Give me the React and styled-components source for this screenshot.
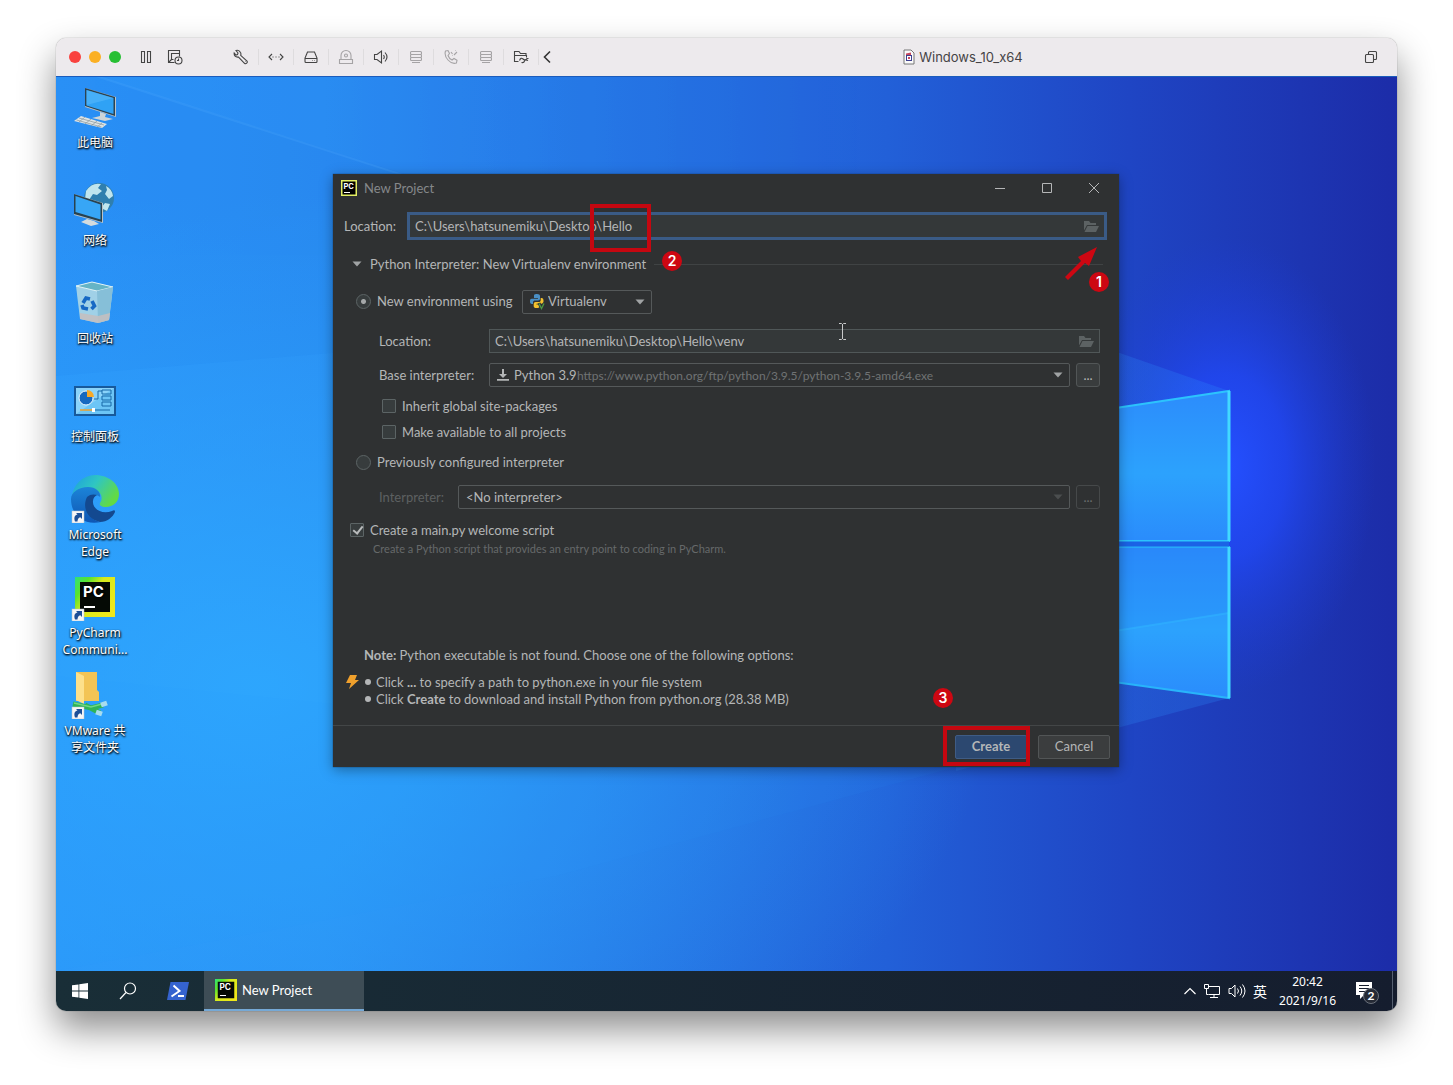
import React, { useState } from "react";
import styled, { createGlobalStyle } from "styled-components";

const DESKTOP_ICONS = [
  { lines: ["此电脑"], icon: "computer" },
  { lines: ["网络"], icon: "network" },
  { lines: ["回收站"], icon: "recycle" },
  { lines: ["控制面板"], icon: "panel" },
  { lines: ["Microsoft", "Edge"], icon: "edge" },
  { lines: ["PyCharm", "Communi..."], icon: "pycharm" },
  { lines: ["VMware 共", "享文件夹"], icon: "share" },
];

const App = () => {
  return (
    <Page>
      <GlobalStyle />
      <VmWindow>
        <TitleBar />
        <Desktop>
          <Wallpaper />
          <IconList>
            {DESKTOP_ICONS.map((item) => (
              <DesktopIcon key={item.icon} href="#">
                <DesktopGlyph name={item.icon} />
                {item.lines.map((line) => (
                  <span key={line}>{line}</span>
                ))}
              </DesktopIcon>
            ))}
          </IconList>
          <NewProject />
        </Desktop>
        <Taskbar />
      </VmWindow>
    </Page>
  );
};

export default App;

const TitleBar = () => (
  <Bar>
    <Lights>
      <Light color="#f9423f" aria-label="Close" />
      <Light color="#fbb024" aria-label="Minimize" />
      <Light color="#27bf34" aria-label="Zoom" />
    </Lights>
    <ToolPair>
      <Tool aria-label="Pause">
        <Line16>
          <path d="M3.500 2.500h3v11h-3zM9.500 2.500h3v11h-3z" />
        </Line16>
      </Tool>
      <Tool aria-label="Snapshots">
        <Line16>
          <path d="M7.500 13.500H1.500v-12h11v6M6.500 10.500h-2v-6h8M4.500 10.500l-3 3" />
          <circle cx="11.500" cy="11.500" r="3.500" />
          <path d="M11.500 9.500v2h-1.500" />
        </Line16>
      </Tool>
    </ToolPair>
    <DeviceTools>
      <Tool aria-label="Settings">
        <Line16>
          <path d="M7.500 3.500C6.500 1.500 4.500 1 3 1.500l2 2.500-.5 1.500L3 6 1.200 4C.8 6.500 2.500 8.500 5.500 8l6 6.300c1.500 1.200 3.500-.8 2.500-2.300L7.700 6.300c.3-1 .3-2-.2-2.800z" />
          <path d="M12.300 12.500h.4" />
        </Line16>
      </Tool>
      <Tool aria-label="Network adapter">
        <Line16>
          <path d="M4 5L1 8l3 3M12 5l3 3-3 3M4.500 8h1M7.500 8h1M10.500 8h1" />
        </Line16>
      </Tool>
      <Tool aria-label="Hard disk">
        <Line16>
          <path d="M4.500 3h7l2.500 6v3.500q0 1-1 1H3q-1 0-1-1V9zM2 9.500h12M9.500 11.500h.5M11.500 11.500h.5" />
        </Line16>
      </Tool>
      <Tool $off aria-label="CD drive">
        <Line16>
          <path d="M1.500 10.500h13v4h-13zM3 10.500V6.500a5 5 0 0 1 10 0v4" />
          <circle cx="8" cy="6.500" r="1.500" />
        </Line16>
      </Tool>
      <Tool aria-label="Sound">
        <Line16>
          <path d="M1.500 5.500v5H4l4.500 3.500V2L4 5.500zM10.500 6q1.500 2 0 4M12 3.500q4 4.500 0 9" />
        </Line16>
      </Tool>
      <Tool $off aria-label="Storage">
        <StackIcon />
      </Tool>
      <Tool $off aria-label="Phone">
        <Line16>
          <path d="M2.500 2L5 1.500l1.500 3L5 6.500q1 3 4 4.500l2-1.500 3 1.800-.6 2.700Q9 15.500 5 11T2.500 2zM8 3l1.500 2M11 6l3-3M12.500 1.500h.5M9.500 6.500h.5" />
        </Line16>
      </Tool>
      <Tool $off aria-label="Printer">
        <StackIcon />
      </Tool>
      <Tool aria-label="Shared folders">
        <Line16>
          <path d="M5.500 12.500h-4v-10H6l1.500 2H13v2M1.500 6.500h12v2M6.500 11.500q1.500-3.500 3.500-1.500t4-.5h1.500M8.500 13.500q2.500.5 3-1.500t3.500-.5" />
        </Line16>
      </Tool>
      <ChevronTool aria-label="Collapse">
        <svg width="8" height="14" viewBox="0 0 8 14" fill="none" stroke="#333" strokeWidth="1.600">
          <path d="M7 1.500L1.500 7 7 12.500" />
        </svg>
      </ChevronTool>
    </DeviceTools>
    <WindowTitle>
      <svg width="12" height="16" viewBox="0 0 12 16" fill="none">
        <path d="M1 1h7l3 3v11H1z" fill="#fafafa" stroke="#777" />
        <path d="M3 4.500l5-1v5h-5z" fill="#c84a5f" />
        <rect x="3.500" y="6.500" width="5" height="5" fill="#fff" stroke="#3d3f8f" />
        <path d="M5 8h2v2H5z" fill="#c84a5f" />
      </svg>
      Windows_10_x64
    </WindowTitle>
    <Tool aria-label="Windows">
      <Line16>
        <rect x="2.500" y="5.500" width="8" height="8" rx="1" />
        <path d="M5.500 5V3.500q0-1 1-1h6q1 0 1 1v6q0 1-1 1H11" />
      </Line16>
    </Tool>
  </Bar>
);

const Line16 = ({ children }) => (
  <svg width="16" height="16" viewBox="0 0 16 16" fill="none" stroke="currentColor" strokeWidth="1.100">
    {children}
  </svg>
);

const StackIcon = () => (
  <Line16>
    <rect x="2.500" y="2.500" width="11" height="3" rx="1" />
    <rect x="2.500" y="5.500" width="11" height="3" rx="1" />
    <rect x="2.500" y="8.500" width="11" height="3" rx="1" />
    <path d="M4 13.500h8" />
  </Line16>
);

const Wallpaper = () => (
  <Backdrop viewBox="0 0 1341 895" preserveAspectRatio="none" aria-hidden="true">
    <defs>
      <linearGradient id="sky" x1="0" y1="0" x2="1" y2="0">
        <stop offset="0" stopColor="#2b93f8" />
        <stop offset="0.200" stopColor="#2a8cf2" />
        <stop offset="0.400" stopColor="#2678e6" />
        <stop offset="0.620" stopColor="#2260d8" />
        <stop offset="0.800" stopColor="#1f45c4" />
        <stop offset="1" stopColor="#1c2ca8" />
      </linearGradient>
      <radialGradient id="beam" cx="0.150" cy="0.680" r="0.550">
        <stop offset="0" stopColor="#2eaaff" stopOpacity="0.850" />
        <stop offset="1" stopColor="#2eaaff" stopOpacity="0" />
      </radialGradient>
      <radialGradient id="glow">
        <stop offset="0" stopColor="#2450ff" />
        <stop offset="0.400" stopColor="#2148f6" stopOpacity="0.800" />
        <stop offset="1" stopColor="#1e3cd6" stopOpacity="0" />
      </radialGradient>
      <linearGradient id="pane" x1="0" y1="0" x2="0" y2="1">
        <stop offset="0" stopColor="#2c8cfc" />
        <stop offset="0.550" stopColor="#2ca2fd" />
        <stop offset="1" stopColor="#2a8cfc" />
      </linearGradient>
      <linearGradient id="ray" x1="0" y1="0" x2="1" y2="0">
        <stop offset="0" stopColor="#38a8ff" stopOpacity="0.150" />
        <stop offset="1" stopColor="#2a8cff" stopOpacity="0.250" />
      </linearGradient>
    </defs>
    <rect width="1341" height="895" fill="url(#sky)" />
    <rect width="1341" height="895" fill="url(#beam)" />
    <path d="M40 0L780 235 0 300V0z" fill="#0f62d8" opacity="0.060" />
    <path d="M40 0L800 245" stroke="#54b0ff" strokeWidth="2" opacity="0.200" />
    <ellipse cx="1170" cy="390" rx="150" ry="230" fill="url(#glow)" />
    <path d="M900 220L1173 315V622L900 695z" fill="url(#ray)" />
    <path d="M900 691L500 800 0 895V600z" fill="#2f9dff" opacity="0.070" />
    <path d="M900 356L1173 315V465H900z" fill="url(#pane)" stroke="#2cc3fd" strokeWidth="2" />
    <path d="M900 471H1173V622L900 584z" fill="url(#pane)" stroke="#28b4fb" strokeWidth="2" />
    <path d="M900 580L1173 537V471H900z" fill="#1c7cf4" opacity="0.200" />
    <path d="M900 580L1173 537" stroke="#2fb0ff" strokeWidth="2" opacity="0.700" />
    <path d="M1173 315v150M1173 471v151" stroke="#42d9ff" strokeWidth="3" />
    <path d="M900 468h273" stroke="#1b63e6" strokeWidth="5" />
    <path d="M0 .5h1341" stroke="#1b5cbc" />
  </Backdrop>
);

const PyCharmMark = ({ size }) => (
  <svg width={size} height={size} viewBox="0 0 40 40">
    <defs>
      <linearGradient id={"pc" + size} x1="0" y1="0" x2="1" y2="0.700">
        <stop offset="0" stopColor="#2fe07c" />
        <stop offset="0.250" stopColor="#59e32e" />
        <stop offset="0.500" stopColor="#d6ea1c" />
        <stop offset="1" stopColor="#f0e81a" />
      </linearGradient>
    </defs>
    <rect width="40" height="40" fill={"url(#pc" + size + ")"} />
    <rect x="5" y="5" width="30" height="30" fill="#050a05" />
    <text x="8" y="20" fill="#fff" fontFamily="Inter, sans-serif" fontWeight="700" fontSize="15">
      PC
    </text>
    <path d="M9 30h11" stroke="#fff" strokeWidth="2" />
  </svg>
);

const Shortcut = () => (
  <g>
    <rect x="1" y="36" width="12" height="12" fill="#f6f6f6" stroke="#b8c4cc" strokeWidth=".5" />
    <path d="M4 46.500C2.500 42 4 40 6.500 39.500L5 38h6v6l-1.700-1.700Q6.500 43 6.500 46.500z" fill="#1d4f97" />
  </g>
);

const DesktopGlyph = ({ name }) => (
  <svg width="48" height="48" viewBox="0 0 48 48">
    {name === "computer" && (
      <>
        <path d="M14 5l31 9v20L14 24z" fill="#b9c3c8" />
        <path d="M14 5l30 9v19L14 23z" fill="#2c4351" />
        <path d="M15.500 7l27 8v16l-27-8.500z" fill="#2fa2f5" />
        <path d="M15.500 7l27 8-27 7z" fill="#57b7fa" opacity=".6" />
        <path d="M29 29l6 2-1 3 8 2-8 2-13-3 8-2z" fill="#cfd6d8" />
        <path d="M10 33l26 8-5 4L3 38z" fill="#dfe4e5" />
        <path d="M8 35l25 7M5.500 37l25 7M14 34l-6 5M20 36l-6 5M26 38l-6 5M31 40l-5 4" stroke="#87959b" strokeWidth=".7" />
      </>
    )}
    {name === "network" && (
      <>
        <circle cx="28" cy="17" r="15" fill="#2f7fae" />
        <path d="M15 10q6-9 15-7l-3 4 4 3-5 4-4-1-4 6-4-1zM35 5q6 3 7 10l-4 3-4-5 2-4zM34 22l5 1-3 7-6-3z" fill="#bfe5ee" />
        <path d="M3 13l29 9v20L3 34z" fill="#b9c3c8" />
        <path d="M3 13l28 9v19L3 33z" fill="#29424f" />
        <path d="M4.500 15l25 8.500v15L4.500 31z" fill="#37a6f6" />
        <path d="M16 38l7 2 5 3-8 2-10-4z" fill="#d5dcde" />
      </>
    )}
    {name === "recycle" && (
      <>
        <path d="M5 7l16-4 21 5-4 33-11 3-18-4z" fill="#a7d4e6" opacity=".95" />
        <path d="M5 7l16-4 21 5-16 4z" fill="#65b4c6" stroke="#dff2f7" strokeWidth="1" />
        <path d="M26 12l16-4-4 33-11 3z" fill="#86bfd8" />
        <path d="M9 34l18 3 12-3-1 7-11 3-18-4z" fill="#c3bfc0" opacity=".9" />
        <g fill="none" stroke="#1769c4" strokeWidth="3.600">
          <path d="M12 24l3-5 4 1M21 22l2.500 5-3 3M17 30l-5-1-1-3" />
        </g>
      </>
    )}
    {name === "panel" && (
      <>
        <rect x="3" y="9" width="42" height="30" fill="#17599b" />
        <rect x="5" y="11" width="38" height="26" fill="#6cc5f6" />
        <path d="M5 37V11h38z" fill="#8ad3fa" />
        <circle cx="15" cy="21" r="7" fill="#1769c0" stroke="#e9f7ff" />
        <path d="M16 20v-7a7 7 0 0 1 7 7z" fill="#f7a928" />
        <path d="M23 22h4v-8h4M31 13h9v4h-9zM31 19h9v4h-9zM31 25h9v4h-9z" fill="none" stroke="#1769a8" />
        <path d="M9 33h13" stroke="#f0a02a" strokeWidth="1.500" />
        <path d="M24 33h15" stroke="#1769a8" />
        <rect x="21" y="31" width="3" height="4" fill="#fff" />
      </>
    )}
    {name === "edge" && (
      <>
        <defs>
          <linearGradient id="edgeTop" x1="0" y1="0" x2="1" y2=".5">
            <stop offset="0" stopColor="#1c9de0" />
            <stop offset=".5" stopColor="#2fc6c2" />
            <stop offset="1" stopColor="#62da45" />
          </linearGradient>
          <linearGradient id="edgeSide" x1="0" y1="0" x2="0" y2="1">
            <stop offset="0" stopColor="#1c84d8" />
            <stop offset="1" stopColor="#0e56b4" />
          </linearGradient>
        </defs>
        <path d="M1 22A23.500 23.500 0 0 1 24 0c14 0 24 9 24 19 0 8-6 13-13 13-5 0-7-2-6-4 4-5 1-14-10-14C9 13 3 16 1 22z" fill="url(#edgeTop)" />
        <path d="M0 24c0-7 8-12 17-12 9 0 13 6 12 10-4-4-13-1-13 9 0 9 6 15 14 16C13 51 0 40 0 24z" fill="url(#edgeSide)" />
        <path d="M16 22c-5 10 0 22 13 25 7 0 13-5 15-10 0-2-1-2-3-1-10 4-20-2-19-10 0-3 2-5 4-6-3-1-7-1-10 2z" fill="#134990" />
        <Shortcut />
      </>
    )}
    {name === "pycharm" && (
      <>
        <svg x="4" y="4" width="40" height="40">
          <PyCharmMark size={40} />
        </svg>
        <Shortcut />
      </>
    )}
    {name === "share" && (
      <>
        <path d="M5 1h21v18l2 2v9H5z" fill="#f3c455" />
        <path d="M5 1l8 4v28l-8-4z" fill="#fde08b" />
        <path d="M2 33l18 4 12-3M14 34l15 8" fill="none" stroke="#2fb457" strokeWidth="5" />
        <path d="M3 32l17 4 11-3" fill="none" stroke="#6fd684" strokeWidth="1.500" />
        <path d="M30 34l6-2M25 41l6 2" stroke="#a8dcee" strokeWidth="5" />
        <Shortcut />
      </>
    )}
  </svg>
);

const FolderIcon = () => (
  <svg width="16" height="13" viewBox="0 0 16 13" fill="#5c6263">
    <path d="M1 1h5l1.500 2H13v2H4L1 10.500z" />
    <path d="M4.500 6H16l-3 6H1.500z" />
  </svg>
);

const Caret = ({ color = "#a0a3a4" }) => (
  <svg width="10" height="6" viewBox="0 0 10 6" fill={color}>
    <path d="M.5.500h9L5 5.500z" />
  </svg>
);

const NewProject = () => {
  const [location, setLocation] = useState("C:\\Users\\hatsunemiku\\Desktop\\Hello");
  const [venv, setVenv] = useState("C:\\Users\\hatsunemiku\\Desktop\\Hello\\venv");
  const [mode, setMode] = useState("new");

  return (
    <Dialog role="dialog" aria-labelledby="dialog-title">
      <DialogHeader>
        <svg width="16" height="16" viewBox="0 0 16 16">
          <rect x=".75" y=".75" width="14.500" height="14.500" fill="#000" stroke="#e3ee62" strokeWidth="1.500" />
          <text x="2.500" y="8.500" fill="#fff" fontFamily="Inter, sans-serif" fontWeight="700" fontSize="7.500">
            PC
          </text>
          <path d="M3 12.500h6" stroke="#fff" strokeWidth="1.200" />
        </svg>
        <h1 id="dialog-title">New Project</h1>
        <CaptionButton aria-label="Minimize">
          <path d="M0 5.500h10" />
        </CaptionButton>
        <CaptionButton aria-label="Maximize">
          <path d="M.5.500h9v9h-9z" />
        </CaptionButton>
        <CaptionButton aria-label="Close">
          <path d="M0 0l10 10M10 0L0 10" />
        </CaptionButton>
      </DialogHeader>

      <Form onSubmit={(e) => e.preventDefault()}>
        <Row $height={48} $indent={11} $end={12}>
          <FieldLabel htmlFor="location" $width={63}>
            Location:
          </FieldLabel>
          <Field $focus>
            <input id="location" value={location} onChange={(e) => setLocation(e.target.value)} />
            <BrowseButton type="button" aria-label="Browse">
              <FolderIcon />
            </BrowseButton>
          </Field>
        </Row>

        <SectionRow type="button">
          <Caret />
          Python Interpreter: New Virtualenv environment
          <Rule />
        </SectionRow>

        <Row $height={47} $indent={23}>
          <Radio id="env-new" name="env" checked={mode === "new"} onChange={() => setMode("new")} />
          <FieldLabel htmlFor="env-new" $width={145}>
            New environment using
          </FieldLabel>
          <Combo $width="130px" $pad={25}>
            <select aria-label="Environment tool">
              <option>Virtualenv</option>
            </select>
            <ComboOverlay>
              <svg width="17" height="17" viewBox="0 0 17 17">
                <path d="M8 1c-3 0-3 1-3 2v2h4v.7H3C1 5.700 1 7 1 8.500S1.500 11 3 11h1V9.500C4 8 5 7.500 6 7.500h3c1.500 0 2-.7 2-2V3c0-1.300-1-2-3-2z" fill="#4a8fc4" />
                <path d="M7 15c3 0 4-.5 4-2v-1.500H7.500v-.7h5c2-.3 2-1.300 2-3S14 5 12.500 5h-.8v2c0 1.500-.7 2-2 2h-3c-1.200 0-2 .7-2 2v2c0 1.500 1 2 2.300 2z" fill="#f3c12e" />
                <path d="M10 10l2.500 5.500L15.500 10" fill="none" stroke="#2f3233" strokeWidth="3" />
                <path d="M10 10.500l2.500 5 2.500-5" fill="none" stroke="#4d9a44" strokeWidth="1.300" />
              </svg>
              <ComboArrow>
                <Caret />
              </ComboArrow>
            </ComboOverlay>
          </Combo>
        </Row>

        <Row $height={32} $indent={46}>
          <FieldLabel htmlFor="venv" $width={110}>
            Location:
          </FieldLabel>
          <Field>
            <input id="venv" value={venv} onChange={(e) => setVenv(e.target.value)} />
            <BrowseButton type="button" aria-label="Browse">
              <FolderIcon />
            </BrowseButton>
          </Field>
        </Row>

        <Row $height={36} $indent={46}>
          <FieldLabel htmlFor="base" $width={110}>
            Base interpreter:
          </FieldLabel>
          <Combo $pad={24}>
            <select id="base">
              <option>Python 3.9</option>
            </select>
            <ComboOverlay>
              <svg width="14" height="14" viewBox="0 0 14 14" fill="#b4b6b7">
                <path d="M6 1h2v5h3l-4 4-4-4h3zM1 11h12v1.800H1z" />
              </svg>
              <Url>https://www.python.org/ftp/python/3.9.5/python-3.9.5-amd64.exe</Url>
              <ComboArrow>
                <Caret />
              </ComboArrow>
            </ComboOverlay>
          </Combo>
          <MoreButton type="button">...</MoreButton>
        </Row>

        <Row $height={26} $indent={49}>
          <Check id="inherit" />
          <label htmlFor="inherit">Inherit global site-packages</label>
        </Row>
        <Row $height={26} $indent={49}>
          <Check id="available" />
          <label htmlFor="available">Make available to all projects</label>
        </Row>

        <Row $height={34} $indent={23}>
          <Radio id="env-old" name="env" checked={mode === "old"} onChange={() => setMode("old")} />
          <label htmlFor="env-old">Previously configured interpreter</label>
        </Row>

        <Row $height={36} $indent={46}>
          <FieldLabel htmlFor="interpreter" $width={79} $dim>
            Interpreter:
          </FieldLabel>
          <Combo $pad={7}>
            <select id="interpreter">
              <option>&lt;No interpreter&gt;</option>
            </select>
            <ComboOverlay>
              <ComboArrow>
                <Caret color="#4b4e4f" />
              </ComboArrow>
            </ComboOverlay>
          </Combo>
          <MoreButton type="button" disabled>
            ...
          </MoreButton>
        </Row>

        <Row $height={30} $indent={17}>
          <Check id="welcome" defaultChecked />
          <label htmlFor="welcome">Create a main.py welcome script</label>
        </Row>
        <Hint>Create a Python script that provides an entry point to coding in PyCharm.</Hint>

        <Note>
          <p>
            <b>Note:</b> Python executable is not found. Choose one of the following options:
          </p>
          <svg width="14" height="16" viewBox="0 0 14 16" fill="#f0a02c">
            <path d="M4 1h7L9 6h4L3 15l2-6H0z" />
          </svg>
          <ul>
            <li>
              Click <b>...</b> to specify a path to python.exe in your file system
            </li>
            <li>
              Click <b>Create</b> to download and install Python from python.org (28.38 MB)
            </li>
          </ul>
        </Note>

        <Footer>
          <PushButton $primary>Create</PushButton>
          <PushButton type="button">Cancel</PushButton>
        </Footer>
      </Form>

      <Mark $left={257} $top={30} $width={61} $height={48} />
      <Mark $left={610} $top={552} $width={87} $height={40} />
      <Badge $left={756} $top={98}>1</Badge>
      <Badge $left={329} $top={77}>2</Badge>
      <Badge $left={600} $top={514}>3</Badge>
      <Arrow width="34" height="34" viewBox="0 0 34 34">
        <path d="M0 31L16 15l-3-4L32 1 24 20l-4-3L3 34z" fill="#cd0712" />
      </Arrow>
      <IBeam width="9" height="17" viewBox="0 0 9 17" fill="none" stroke="#c9cacb">
        <path d="M1 .5h2.500l1 1 1-1H8M4.500 1v15M1 16.500h2.500l1-1 1 1H8" />
      </IBeam>
    </Dialog>
  );
};

const CaptionButton = ({ children, ...rest }) => (
  <Caption type="button" {...rest}>
    <svg width="10" height="10" viewBox="0 0 10 10" fill="none" stroke="#b5b6b7">
      {children}
    </svg>
  </Caption>
);

const Taskbar = () => (
  <TaskbarRow>
    <TaskIcon aria-label="Start">
      <svg width="16" height="16" viewBox="0 0 16 16" fill="#fff">
        <path d="M0 2.300L6.500 1.400v6.200H0zM7.300 1.300L16 0v7.600H7.300zM0 8.400h6.500v6.200L0 13.700zM7.300 8.400H16V16l-8.700-1.200z" />
      </svg>
    </TaskIcon>
    <TaskIcon aria-label="Search">
      <svg width="18" height="18" viewBox="0 0 18 18" fill="none" stroke="#fff" strokeWidth="1.200">
        <circle cx="11" cy="6.500" r="5.500" />
        <path d="M7 10.500L1 17" />
      </svg>
    </TaskIcon>
    <TaskIcon $wide aria-label="PowerShell">
      <svg width="24" height="20" viewBox="0 0 24 20">
        <path d="M4.500 1H23l-3.500 18H1z" fill="#3563cf" />
        <path d="M7.500 4.500l6 5.500-8 5.500M12 15h6" fill="none" stroke="#fff" strokeWidth="2" />
      </svg>
    </TaskIcon>
    <TaskButton>
      <PyCharmMark size={22} />
      New Project
    </TaskButton>
    <Tray>
      <svg width="12" height="8" viewBox="0 0 12 8" fill="none" stroke="#fff" strokeWidth="1.200">
        <path d="M.5 7L6 1.500 11.500 7" />
      </svg>
      <svg width="18" height="16" viewBox="0 0 18 16" fill="none" stroke="#fff">
        <path d="M6 3.500h10.500v8H5.500M11 11.500v3M7 14.500h8M1.500 1.500h4v4h-4zM3.500 5.500v6h2" />
      </svg>
      <svg width="18" height="16" viewBox="0 0 18 16" fill="none" stroke="#fff">
        <path d="M1 5.500v5h2.500L7 14V2L3.500 5.500zM9.500 5.500q2 2.500 0 5M12 3.500q3.500 4.500 0 9M14.500 1.500q5 6.500 0 13" />
      </svg>
      <Ime>英</Ime>
      <Clock>
        <span>20:42</span>
        <span>2021/9/16</span>
      </Clock>
      <ActionCenter aria-label="Notifications">
        <svg width="16" height="18" viewBox="0 0 16 18">
          <path d="M0 0h16v13H8l-4 4v-4H0z" fill="#fff" />
          <path d="M3 3.500h10M3 6.500h10M3 9.500h6" stroke="#161e2e" />
        </svg>
        <Count>2</Count>
      </ActionCenter>
    </Tray>
  </TaskbarRow>
);

const GlobalStyle = createGlobalStyle`
  * {
    box-sizing: border-box;
  }

  body {
    margin: 0;
    background: #fff;
  }

  button,
  input,
  select {
    margin: 0;
    padding: 0;
    border: 0;
    background: none;
    color: inherit;
    font: inherit;
  }
`;

const Page = styled.div`
  min-height: 100vh;
  display: flex;
  padding: 38px 56px 74px;
  font-family: Lato, "Noto Sans CJK SC", sans-serif;
  font-size: 13px;
  line-height: 17px;
`;

const VmWindow = styled.main`
  flex: 1;
  display: flex;
  flex-direction: column;
  border-radius: 10px;
  overflow: hidden;
  box-shadow: 0 0 1px rgba(0, 0, 0, 0.6), 0 18px 36px rgba(0, 0, 0, 0.45);
`;

const Bar = styled.header`
  height: 38px;
  display: flex;
  align-items: center;
  padding: 0 18px 0 13px;
  background: #edeaed;
  color: #444;
`;

const Lights = styled.div`
  display: flex;
  gap: 8px;
`;

const Light = styled.button`
  width: 12px;
  height: 12px;
  border-radius: 50%;
  background: ${(props) => props.color};
`;

const Tool = styled.button`
  display: flex;
  justify-content: center;
  color: ${(props) => (props.$off ? "#a5a3a5" : "#444")};
`;

const ToolPair = styled.div`
  display: flex;
  gap: 13px;
  margin-left: 17px;
`;

const DeviceTools = styled.div`
  display: flex;
  align-items: center;
  margin-left: 41px;

  ${Tool} {
    width: 35px;
    border-right: 1px solid #dedcde;
  }
`;

const ChevronTool = styled.button`
  display: flex;
  padding-left: 4px;
`;

const WindowTitle = styled.div`
  flex: 1;
  display: flex;
  align-items: center;
  justify-content: center;
  gap: 4px;
  padding-left: 12px;
  font-family: Inter, sans-serif;
  color: #454345;
`;

const Desktop = styled.section`
  flex: 1;
  min-height: 720px;
  position: relative;
`;

const Backdrop = styled.svg`
  position: absolute;
  inset: 0;
  width: 100%;
  height: 100%;
`;

const IconList = styled.nav`
  position: relative;
  display: grid;
  grid-auto-rows: 98px;
  width: 78px;
  padding-top: 7px;
`;

const DesktopIcon = styled.a`
  display: flex;
  flex-direction: column;
  align-items: center;
  color: #fff;
  font-family: "Noto Sans", "Noto Sans CJK SC", sans-serif;
  font-size: 12px;
  text-decoration: none;
  text-shadow: 0 1px 2px #000, 1px 1px 2px #000;
  white-space: nowrap;

  svg + span {
    margin-top: 3px;
  }
`;

const Dialog = styled.section`
  position: absolute;
  left: 277px;
  top: 98px;
  width: 786px;
  height: 593px;
  display: flex;
  flex-direction: column;
  background: #2f3132;
  color: #b4b6b7;
  box-shadow: 0 0 1px #0c2f5c, 0 3px 12px rgba(0, 0, 0, 0.35);
`;

const DialogHeader = styled.header`
  height: 28px;
  display: flex;
  align-items: center;
  padding: 0 2px 0 8px;

  h1 {
    flex: 1;
    margin: 0 0 0 7px;
    font-size: 13px;
    font-weight: 400;
    color: #85888a;
  }
`;

const Caption = styled.button`
  width: 47px;
  height: 28px;
  display: flex;
  align-items: center;
  justify-content: center;
`;

const Form = styled.form`
  flex: 1;
  display: flex;
  flex-direction: column;
`;

const Row = styled.div`
  display: flex;
  align-items: center;
  height: ${(props) => props.$height}px;
  padding: 0 ${(props) => props.$end || 19}px 0 ${(props) => props.$indent}px;
`;

const Field = styled.div`
  flex: 1;
  display: flex;
  align-items: center;
  height: ${(props) => (props.$focus ? 28 : 24)}px;
  border: ${(props) => (props.$focus ? "3px solid #3a5b86" : "1px solid #505758")};
  background: #343839;

  input {
    flex: 1;
    min-width: 0;
    height: 100%;
    padding-left: 5px;
    outline: none;
  }
`;

const BrowseButton = styled.button`
  display: flex;
  padding: 4px 5px;
`;

const SectionRow = styled.button`
  display: flex;
  align-items: center;
  gap: 8px;
  height: 28px;
  padding: 0 16px 0 19px;
`;

const Rule = styled.span`
  flex: 1;
  height: 1px;
  background: #404344;
`;

const Radio = styled.input.attrs({ type: "radio" })`
  appearance: none;
  width: 15px;
  height: 15px;
  margin-right: 6px;
  border: 1px solid #5c6465;
  border-radius: 50%;
  background: #373c3d;

  &:checked {
    background: radial-gradient(circle, #a5a8a9 0 2px, #373c3d 3px);
  }
`;

const FieldLabel = styled.label`
  width: ${(props) => props.$width}px;
  color: ${(props) => (props.$dim ? "#5d6061" : "inherit")};
`;

const Combo = styled.div`
  display: grid;
  align-items: center;
  height: 24px;
  border: 1px solid #55595a;
  border-radius: 2px;
  ${(props) => (props.$width ? `width: ${props.$width};` : "flex: 1;")}

  select {
    grid-area: 1 / 1;
    appearance: none;
    width: 100%;
    height: 22px;
    padding-left: ${(props) => props.$pad}px;
    outline: none;
  }
`;

const ComboOverlay = styled.div`
  grid-area: 1 / 1;
  display: flex;
  align-items: center;
  padding: 0 6px;
  pointer-events: none;
`;

const ComboArrow = styled.span`
  display: flex;
  margin-left: auto;
`;

const Url = styled.span`
  margin-left: 67px;
  font-size: 12px;
  color: #707374;
`;

const MoreButton = styled.button`
  width: 24px;
  height: 24px;
  margin-left: 6px;
  border: 1px solid #525657;
  border-radius: 3px;
  background: #393c3d;

  &:disabled {
    border-color: #46494a;
    background: none;
    color: #6a6d6e;
  }
`;

const Check = styled.input.attrs({ type: "checkbox" })`
  appearance: none;
  width: 14px;
  height: 14px;
  margin-right: 6px;
  border: 1px solid #5c6465;
  border-radius: 1px;
  background: #373c3d;

  &:checked::after {
    content: "";
    display: block;
    width: 4px;
    height: 8px;
    margin: 0 0 0 4px;
    border: solid #b9bbbc;
    border-width: 0 2px 2px 0;
    transform: rotate(38deg);
  }
`;

const Hint = styled.p`
  margin: 0;
  padding-left: 40px;
  font-size: 11px;
  line-height: 8px;
  color: #66696a;
`;

const Note = styled.div`
  display: grid;
  grid-template-columns: 18px 1fr;
  row-gap: 10px;
  margin-top: auto;
  padding: 0 13px 17px;

  p {
    grid-column: 2;
    margin: 0;
  }

  ul {
    margin: 0;
    padding: 0;
    list-style: none;
  }

  li::before {
    content: "";
    display: inline-block;
    width: 6px;
    height: 6px;
    margin: 0 5px 2px 1px;
    border-radius: 50%;
    background: #b4b6b7;
  }
`;

const Footer = styled.footer`
  display: flex;
  align-items: center;
  justify-content: flex-end;
  gap: 11px;
  height: 42px;
  padding-right: 9px;
  border-top: 1px solid #434647;
`;

const PushButton = styled.button`
  width: 72px;
  height: 24px;
  border: 1px solid ${(props) => (props.$primary ? "#3f5c85" : "#525556")};
  border-radius: 2px;
  background: ${(props) => (props.$primary ? "#2c4870" : "#3b3d3e")};
  font-weight: ${(props) => (props.$primary ? 700 : 400)};
`;

const Mark = styled.div`
  position: absolute;
  left: ${(props) => props.$left}px;
  top: ${(props) => props.$top}px;
  width: ${(props) => props.$width}px;
  height: ${(props) => props.$height}px;
  border: 4px solid #c50710;
  pointer-events: none;
`;

const Badge = styled.span`
  position: absolute;
  left: ${(props) => props.$left}px;
  top: ${(props) => props.$top}px;
  width: 20px;
  height: 20px;
  border-radius: 50%;
  background: #cd0712;
  color: #fff;
  font: 600 14px/20px Inter, sans-serif;
  text-align: center;
`;

const Arrow = styled.svg`
  position: absolute;
  left: 732px;
  top: 72px;
`;

const IBeam = styled.svg`
  position: absolute;
  left: 505px;
  top: 149px;
`;

const TaskbarRow = styled.footer`
  display: flex;
  height: 40px;
  background: linear-gradient(90deg, #192e37, #151d2e);
  color: #fff;
`;

const TaskIcon = styled.button`
  width: ${(props) => (props.$wide ? 52 : 48)}px;
  display: flex;
  align-items: center;
  justify-content: center;
`;

const TaskButton = styled.button`
  display: flex;
  align-items: center;
  gap: 5px;
  width: 160px;
  padding: 0 11px;
  border-bottom: 2px solid #76a9d6;
  background: #3e4d56;
`;

const Tray = styled.div`
  flex: 1;
  display: flex;
  align-items: center;
  justify-content: flex-end;
  gap: 7px;
  margin-right: 4px;
  border-right: 1px solid #566071;
`;

const Ime = styled.span`
  font-size: 14px;
`;

const Clock = styled.time`
  display: flex;
  flex-direction: column;
  align-items: center;
  margin-left: 5px;
  font-family: "Noto Sans", sans-serif;
  font-size: 12px;
  line-height: 19px;
`;

const ActionCenter = styled.button`
  position: relative;
  display: flex;
  margin: 0 20px 0 13px;
`;

const Count = styled.span`
  position: absolute;
  left: 7px;
  top: 6px;
  width: 16px;
  height: 16px;
  border: 1px solid #6c727c;
  border-radius: 50%;
  background: #252a35;
  font-size: 12px;
  font-weight: 700;
  line-height: 14px;
  text-align: center;
`;
